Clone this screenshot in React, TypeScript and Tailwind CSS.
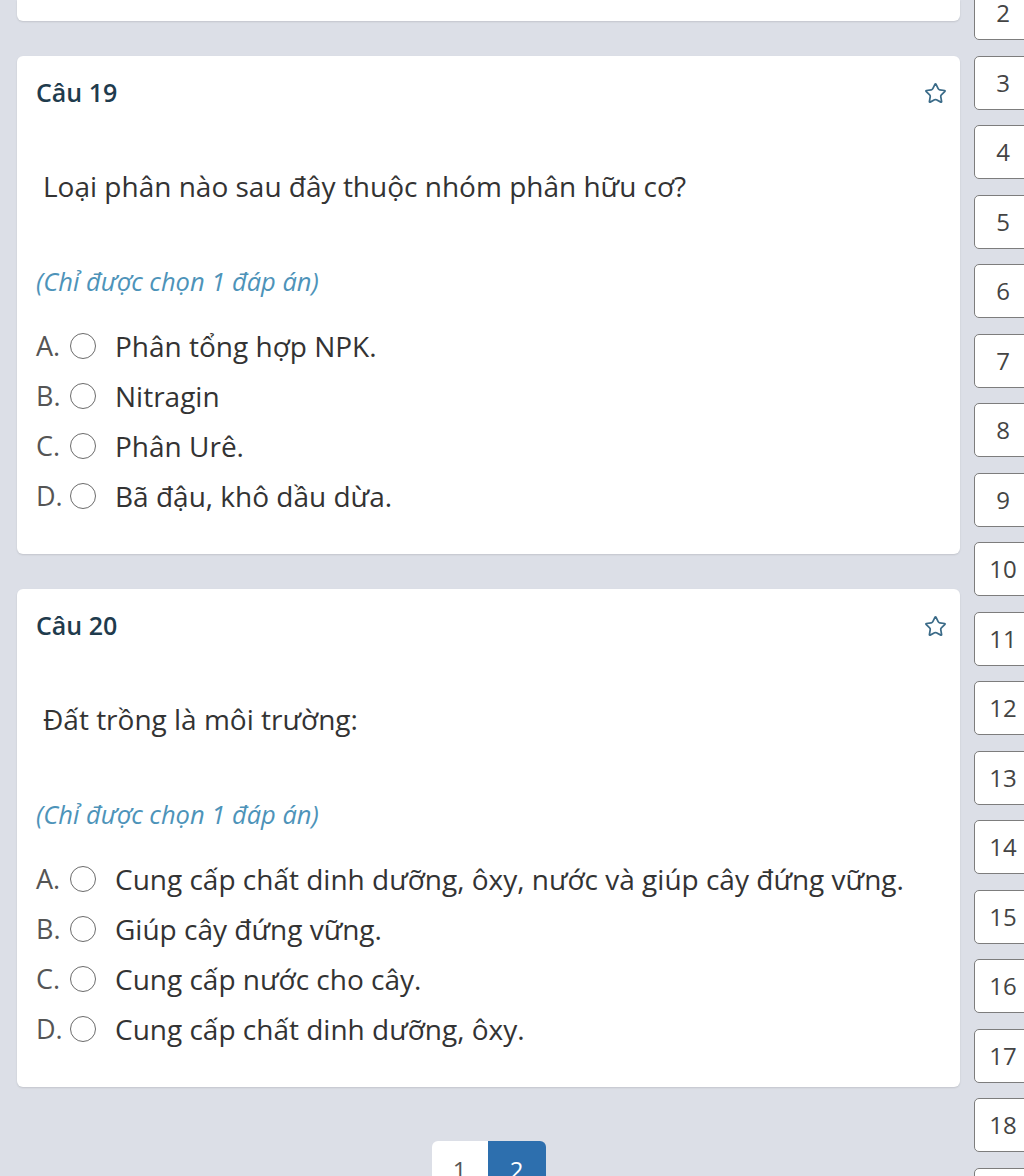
import { Star } from 'lucide-react'

type Question = {
  num: number
  text: string
  options: string[]
}

const questions: Question[] = [
  {
    num: 19,
    text: 'Loại phân nào sau đây thuộc nhóm phân hữu cơ?',
    options: ['Phân tổng hợp NPK.', 'Nitragin', 'Phân Urê.', 'Bã đậu, khô dầu dừa.'],
  },
  {
    num: 20,
    text: 'Đất trồng là môi trường:',
    options: [
      'Cung cấp chất dinh dưỡng, ôxy, nước và giúp cây đứng vững.',
      'Giúp cây đứng vững.',
      'Cung cấp nước cho cây.',
      'Cung cấp chất dinh dưỡng, ôxy.',
    ],
  },
]

const letters = ['A.', 'B.', 'C.', 'D.']

function QuestionCard({ q }: { q: Question }) {
  return (
    <div className="shrink-0 rounded-md bg-white pl-[19px] pr-[13px] pt-[19px] pb-[33px] shadow-[0_1px_2px_rgba(0,0,0,0.12)]">
      <div className="flex h-9 items-center justify-between">
        <span className="text-[25px] font-semibold text-[#1f3b4d]">Câu {q.num}</span>
        <Star size={23} strokeWidth={1.8} className="text-[#3b6b88]" />
      </div>
      <p className="mt-[57px] pl-[7px] text-[28px] leading-9 text-[#333]">{q.text}</p>
      <p className="mt-[59px] text-[25.5px] leading-9 italic text-[#4d93b9]">(Chỉ được chọn 1 đáp án)</p>
      <div className="mt-[22px] flex flex-col">
        {q.options.map((opt, i) => (
          <div key={i} className="flex h-[50px] items-center">
            <span className="w-[34px] text-[27px] text-[#555]">{letters[i]}</span>
            <span className="h-[26px] w-[26px] rounded-full border-[1.5px] border-[#6b6b6b]" />
            <span className="ml-[19px] text-[28px] text-[#333]">{opt}</span>
          </div>
        ))}
      </div>
    </div>
  )
}

export default function App() {
  const nums = Array.from({ length: 18 }, (_, i) => i + 2)
  return (
    <div
      className="flex h-[1176px] w-[1024px] overflow-hidden bg-[#dcdfe7]"
      style={{ fontFamily: '"Open Sans", "Noto Sans", sans-serif' }}
    >
      <div className="ml-[17px] flex w-[943px] shrink-0 flex-col gap-[35px]">
        <div className="h-[21px] shrink-0 rounded-b-md bg-white shadow-[0_1px_2px_rgba(0,0,0,0.12)]" />
        <QuestionCard q={questions[0]} />
        <QuestionCard q={questions[1]} />
        <div className="mt-[19px] flex shrink-0 justify-center">
          <div className="flex h-[60px] overflow-hidden rounded-t-md">
            <div className="flex w-[56px] justify-center bg-white pt-[11px] text-[24px] text-[#555]">1</div>
            <div className="flex w-[58px] justify-center bg-[#2d6fae] pt-[11px] text-[24px] text-white">2</div>
          </div>
        </div>
      </div>
      <div className="ml-[14px] mt-[-14px] flex shrink-0 flex-col gap-[15.5px]">
        {nums.map((n) => (
          <div
            key={n}
            className="flex h-[54px] w-[58px] shrink-0 items-center justify-center rounded-[5px] border-[1.5px] border-[#7d7d7d] bg-white text-[24px] text-[#444]"
          >
            {n}
          </div>
        ))}
      </div>
    </div>
  )
}
